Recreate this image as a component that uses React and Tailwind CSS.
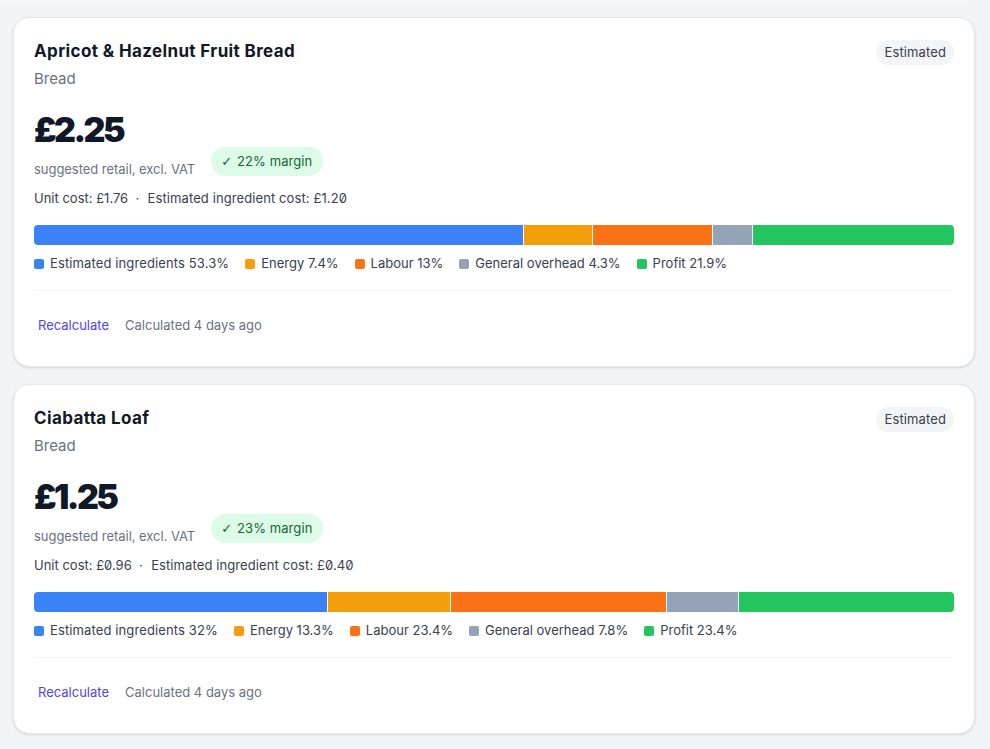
const fontStack = "font-['Inter','Noto_Sans',sans-serif]";

const COLORS = {
  ingredients: "bg-[#3b82f6]",
  energy: "bg-[#f59e0b]",
  labour: "bg-[#f97316]",
  overhead: "bg-[#94a3b8]",
  profit: "bg-[#22c55e]",
};

const products = [
  {
    name: "Apricot & Hazelnut Fruit Bread",
    price: "£2.25",
    margin: "22% margin",
    unit: "£1.76",
    ingredient: "£1.20",
    parts: [
      { key: "ingredients", label: "Estimated ingredients", value: 53.3 },
      { key: "energy", label: "Energy", value: 7.4 },
      { key: "labour", label: "Labour", value: 13 },
      { key: "overhead", label: "General overhead", value: 4.3 },
      { key: "profit", label: "Profit", value: 21.9 },
    ],
  },
  {
    name: "Ciabatta Loaf",
    price: "£1.25",
    margin: "23% margin",
    unit: "£0.96",
    ingredient: "£0.40",
    parts: [
      { key: "ingredients", label: "Estimated ingredients", value: 32 },
      { key: "energy", label: "Energy", value: 13.3 },
      { key: "labour", label: "Labour", value: 23.4 },
      { key: "overhead", label: "General overhead", value: 7.8 },
      { key: "profit", label: "Profit", value: 23.4 },
    ],
  },
];

function ProductCard({ product }) {
  return (
    <div className="bg-white border border-[#e5e7eb] rounded-2xl shadow-sm px-5 pt-5 h-[350px]">
      <div className="flex justify-between items-start">
        <div>
          <h3 className="text-[17px] leading-[26px] font-bold tracking-[0.37px] text-[#111827]">{product.name}</h3>
          <p className="text-[15px] leading-5 mt-[5px] text-[#6b7280]">Bread</p>
        </div>
        <span className="mt-[2px] rounded-full bg-[#f3f4f6] px-2 h-[25px] flex items-center text-[13px] tracking-[0.12px] text-[#374151]">
          Estimated
        </span>
      </div>

      <div className="mt-[19px] mb-px text-[34px] leading-[44px] font-black tracking-[-0.075em] text-[#111827]">{product.price}</div>

      <div className="flex items-center gap-4 h-[29px] -mt-[6px]">
        <span className="text-[13px] tracking-[-0.04px] text-[#6b7280] mt-[17px]">suggested retail, excl. VAT</span>
        <span className="rounded-full bg-[#dcfce7] text-[#166534] text-[13px] h-[29px] pl-[10px] pr-[11px] flex items-center gap-[5px]">
          <span className="font-['DejaVu_Sans',sans-serif]">✓</span>
          <span className="tracking-[0.08px]">{product.margin}</span>
        </span>
      </div>

      <p className="text-[13px] leading-5 mt-3 text-[#374151] slashed-zero">
        Unit cost: {product.unit} &nbsp;·&nbsp; <span className="ml-px tracking-[0.1px]">Estimated ingredient cost: {product.ingredient}</span>
      </p>

      <div className="flex gap-px h-5 mt-[17px] rounded overflow-hidden">
        {product.parts.map((part) => (
          <div key={part.key} className={COLORS[part.key]} style={{ flexGrow: part.value, flexBasis: 0 }} />
        ))}
      </div>

      <div className="flex gap-4 mt-[9px] h-5 items-center text-[13px] text-[#374151]">
        {product.parts.map((part) => (
          <div key={part.key} className="flex items-center gap-[6px]">
            <span className={`w-[10px] h-[10px] rounded-[2px] ${COLORS[part.key]}`} />
            <span className={part.key === "ingredients" ? "tracking-[0.12px]" : ""}>{part.label} {part.value}%</span>
          </div>
        ))}
      </div>

      <div className="border-t border-[#f3f4f6] mt-4 pt-6 flex items-center gap-3 text-[13px] leading-5">
        <button className="text-[#4f46e5] px-1">Recalculate</button>
        <span className="text-[#6b7280]">Calculated 4 days ago</span>
      </div>
    </div>
  );
}

export default function App() {
  return (
    <div className={`${fontStack} min-h-screen bg-[#f3f4f6]`}>
      <div className="h-px w-[968px] bg-[#f0f9ff]" />
      <div className="pl-[13px] pr-[15px] pt-4 flex flex-col gap-[17px]">
        {products.map((product) => (
          <ProductCard key={product.name} product={product} />
        ))}
      </div>
    </div>
  );
}
